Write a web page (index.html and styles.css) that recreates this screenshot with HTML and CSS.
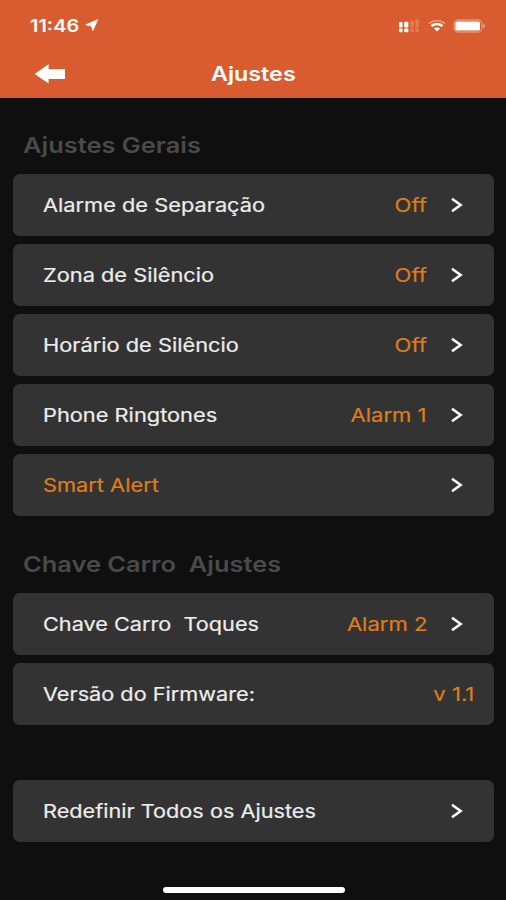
FILE: index.html
```html
<!DOCTYPE html>
<html lang="pt">
<head>
<meta charset="utf-8">
<title>Ajustes</title>
<link rel="stylesheet" href="styles.css">
</head>
<body>
<svg class="defs" width="0" height="0" aria-hidden="true">
  <symbol id="chevron" viewBox="0 0 14 18"><path d="M2 2.8 10.6 9 2 15.2" fill="none" stroke="#fff" stroke-width="2.6"/></symbol>
</svg>
<header class="header">
  <div class="status">
    <span class="time">11:46</span>
    <svg class="locate" width="14" height="13" viewBox="0 0 14 13"><path d="M12.6 .8 7.8 11.6 6.6 7 .9 5.8Z" fill="#fff" stroke="#fff" stroke-width=".9" stroke-linejoin="round"/></svg>
    <div class="indicators">
      <svg width="22" height="16" viewBox="0 0 22 16" fill="#fff">
        <rect x="0" y="4" width="3.6" height="5.6" rx="1"/><rect x="0" y="10.4" width="3.6" height="3.8" rx="1"/>
        <rect x="5.2" y="3.8" width="4.2" height="5.8" rx="1"/><rect x="5.2" y="10.4" width="4.2" height="3.8" rx="1"/>
        <g opacity=".2"><rect x="11.4" y="3" width="3.4" height="6.6"/><rect x="11.4" y="10.6" width="3.4" height="3.4"/><rect x="16.4" y="1.4" width="3.4" height="8.2"/><rect x="16.4" y="10.6" width="3.4" height="3.4"/></g>
      </svg>
      <svg width="20" height="14" viewBox="0 0 20 14" fill="none" stroke="#fff">
        <path d="M1.7 4.6Q10-1.6 18.3 4.6" stroke-width="1.5" opacity=".4"/>
        <path d="M4.4 7Q10 3 15.6 7" stroke-width="2.4"/>
        <path d="M6.8 9.3Q10 7.5 13.2 9.3L10 12.4Z" fill="#fff" stroke="none"/>
      </svg>
      <svg width="33" height="14" viewBox="0 0 33 14">
        <rect x="1" y="1" width="28" height="12" rx="4" fill="none" stroke="#fff" stroke-width="1.3" opacity=".35"/>
        <rect x="2.4" y="2.4" width="24.6" height="9.2" rx="1.6" fill="#fff"/>
        <path d="M30.4 4.4Q34 7 30.4 9.6Z" fill="#fff" opacity=".45"/>
      </svg>
    </div>
  </div>
  <div class="nav">
    <svg class="back" width="32" height="20" viewBox="0 0 32 20"><path d="M.6 10 14.6.2V5.2H31V15H14.6V19.6Z" fill="#fff"/></svg>
    <h1 class="title">Ajustes</h1>
  </div>
</header>
<main class="content">
  <h2 class="heading">Ajustes Gerais</h2>
  <section class="group">
    <div class="row"><span class="label">Alarme de Separação</span><span class="value">Off</span><svg class="chevron"><use href="#chevron"/></svg></div>
    <div class="row"><span class="label">Zona de Silêncio</span><span class="value">Off</span><svg class="chevron"><use href="#chevron"/></svg></div>
    <div class="row"><span class="label">Horário de Silêncio</span><span class="value">Off</span><svg class="chevron"><use href="#chevron"/></svg></div>
    <div class="row"><span class="label">Phone Ringtones</span><span class="value">Alarm 1</span><svg class="chevron"><use href="#chevron"/></svg></div>
    <div class="row"><span class="label accent">Smart Alert</span><svg class="chevron"><use href="#chevron"/></svg></div>
  </section>
  <h2 class="heading second">Chave Carro&nbsp; Ajustes</h2>
  <section class="group">
    <div class="row"><span class="label">Chave Carro&nbsp; Toques</span><span class="value">Alarm 2</span><svg class="chevron"><use href="#chevron"/></svg></div>
    <div class="row"><span class="label">Versão do Firmware:</span><span class="value last">v 1.1</span></div>
  </section>
  <section class="group reset">
    <div class="row"><span class="label">Redefinir Todos os Ajustes</span><svg class="chevron"><use href="#chevron"/></svg></div>
  </section>
</main>
<div class="home"></div>
</body>
</html>
```

FILE: styles.css
```css
* { box-sizing: border-box; }
body {
  margin: 0;
  height: 900px;
  display: flex;
  flex-direction: column;
  overflow: hidden;
  background: #0f0f0f;
  color: #ececec;
  font-family: Inter, "Liberation Sans", sans-serif;
}
.defs { position: absolute; }
.header { height: 98px; background: #d85c2f; color: #fff; flex: none; }
.status { height: 50px; display: flex; align-items: center; padding: 1px 20px 0 30px; }
.time { width: 55px; font-size: 17px; font-weight: 600; line-height: 20px; white-space: nowrap; transform: scaleX(1.17); transform-origin: left; }
.indicators { margin-left: auto; display: flex; align-items: center; gap: 6px; }
.nav { height: 48px; display: grid; grid-template-columns: 1fr auto 1fr; align-items: center; padding: 0 34px; }
.title { margin: 0; font-size: 20px; font-weight: 600; line-height: 24px; transform: scaleX(1.165); }
.content { padding: 0 12px 0 13px; display: flex; flex-direction: column; }
.heading { width: max-content; margin: 33px 0 15px 10px; height: 28px; font-size: 22px; line-height: 28px; font-weight: 600; color: #4a4a4a; white-space: nowrap; transform: scaleX(1.155); transform-origin: left; }
.second { margin-top: 34px; }
.group { display: flex; flex-direction: column; gap: 8px; }
.row { height: 62px; display: flex; align-items: center; padding: 2px 30px 0 30px; border-radius: 7px; background: #333; font-size: 19px; line-height: 24px; font-weight: 430; white-space: nowrap; -webkit-text-stroke: .2px currentColor; }
.label { transform: scaleX(1.147); transform-origin: left; }
.value { margin-left: auto; margin-right: 23px; color: #dd7d1b; transform: scaleX(1.16); transform-origin: right; }
.value.last { margin-right: -10.5px; }
.accent { color: #dd7d1b; }
.chevron { width: 14px; height: 18px; flex: none; margin-top: -2px; }
.label + .chevron { margin-left: auto; }
.group:not(:first-of-type) .label { transform: scaleX(1.141); }
.reset { margin-top: 55px; }
.home { width: 182px; height: 6px; margin: 45px auto 0; border-radius: 3px; background: #fff; position: relative; left: .5px; }
```
